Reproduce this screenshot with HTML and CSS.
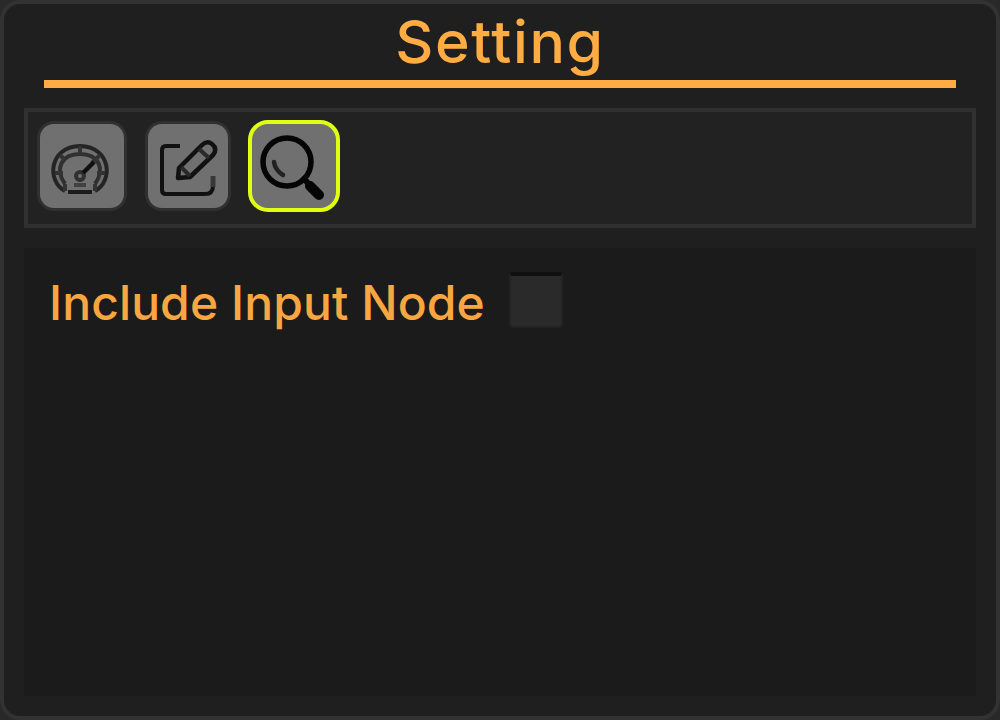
FILE: index.html
```html
<!DOCTYPE html>
<html lang="en">
<head>
<meta charset="utf-8">
<title>Setting</title>
<link rel="stylesheet" href="styles.css">
</head>
<body>
<main class="panel">
  <h1 class="title"><span class="title-text">Setting</span></h1>
  <nav class="toolbar">
    <button class="tool tool-gauge" aria-label="Gauge">
      <svg viewBox="0 0 84 84" fill="none" stroke="#242424" stroke-width="4">
        <path d="M25 67C7 58 8 23 40 22C72 23 73 58 55 67"/>
        <path d="M25 60C14 44 22 30 40 30C58 30 66 44 55 60" stroke="#303030"/>
        <path d="M25 67V60M55 60V67M20 31L25 36M60 31L52 39M15 49H23M57 49H65M40 22V29" stroke="#333"/>
        <circle cx="40" cy="52" r="4" stroke="#303030"/>
        <path d="M43 49L54 38" stroke="#101010" stroke-width="4.5"/>
        <path d="M28 68H52" stroke="#1c1c1c"/>
        <path d="M34 61H46" stroke="#404040"/>
      </svg>
    </button>
    <button class="tool tool-edit" aria-label="Edit">
      <svg viewBox="0 0 80 84" fill="none" stroke="#111" stroke-width="4" stroke-linejoin="round">
        <path d="M32 22H18Q14 22 14 26V66Q14 70 18 70H57Q65 70 65 62"/>
        <path d="M65 63V52" stroke="#383838" stroke-width="5"/>
        <path d="M30 54L31 44L54 21Q59 16 64 20Q70 25 65 31L42 53Z" stroke-width="4.5"/>
        <path d="M51 25L61 34M33 43L42 52" stroke="#292929"/>
      </svg>
    </button>
    <button class="tool tool-search" aria-label="Search">
      <svg viewBox="0 0 84 84" fill="none" stroke="#050505" stroke-linecap="round">
        <circle cx="35" cy="38" r="24" stroke-width="5.5"/>
        <path d="M22 38Q23 46 31 51" stroke="#222" stroke-width="4.5"/>
        <path d="M52 55L58 61" stroke-width="6"/>
        <path d="M58 62L67 71" stroke-width="10"/>
      </svg>
    </button>
  </nav>
  <section class="content">
    <label class="field"><span class="field-label">Include Input Node</span><input class="check" type="checkbox"></label>
  </section>
</main>
</body>
</html>
```
FILE: styles.css
```css
* { box-sizing: border-box; }
body { margin: 0; background: #292929; font-family: Inter, sans-serif; }
.panel { display: flex; flex-direction: column; width: 1000px; height: 720px; padding: 0 20px 20px; border: 4px solid #323232; border-radius: 20px; background: #1f1f1f; }
.title { height: 84px; flex: none; margin: 0 20px 20px; border-bottom: 8px solid #ffad42; color: #ffad42; font-size: 59px; font-weight: 500; line-height: 76px; text-align: center; }
.title-text { display: inline-block; letter-spacing: 1.6px; }
.toolbar { display: flex; flex: none; align-items: flex-start; height: 120px; padding: 12px 0 0 12px; border: 4px solid #303030; background: #222; }
.tool { flex: none; height: 84px; padding: 0; border: 0; border-radius: 14px; background: #707070; box-shadow: 0 0 0 3px #303030; }
.tool svg { display: block; width: 100%; height: 100%; }
.tool-gauge { width: 84px; }
.tool-edit { width: 80px; margin-left: 24px; }
.tool-search { width: 92px; height: 92px; margin: -4px 0 0 20px; border: 4px solid #dfff14; border-radius: 20px; box-shadow: none; }
.content { flex: 1; margin-top: 20px; padding: 24px; background: #1b1b1b; }
.field { display: flex; align-items: center; height: 56px; color: #f8a641; font-size: 48px; font-weight: 500; line-height: 56px; }
.field-label { width: 461px; padding: 5px 0 0 1px; letter-spacing: 0.1px; white-space: nowrap; }
.check { appearance: none; width: 54px; height: 56px; margin: 0; border: 2px solid #232323; border-top: 4px solid #101010; border-radius: 4px; background: #2a2a2a; }
```
